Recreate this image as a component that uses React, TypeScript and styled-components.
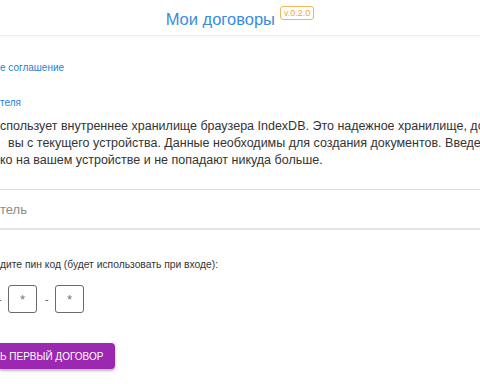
import React from "react";
import styled, { createGlobalStyle } from "styled-components";

const Global = createGlobalStyle`
  html, body { margin: 0; padding: 0; background: #fff; overflow: hidden; }
  body { font-family: "Liberation Sans", Arial, sans-serif; color: #333; }
`;

const Page = styled.div`
  width: 480px;
  height: 384px;
  overflow: hidden;
  display: flex;
  flex-direction: column;
`;

const Header = styled.header`
  height: 35px;
  flex: none;
  display: flex;
  align-items: center;
  justify-content: center;
  gap: 5px;
  border-bottom: 1px solid #ececec;
  box-shadow: 0 1px 2px rgba(0, 0, 0, 0.04);
`;

const Title = styled.h1`
  margin: 0;
  font-size: 16.5px;
  font-weight: 400;
  color: #3a8ce0;
  line-height: 20px;
  padding-top: 3px;
`;

const Badge = styled.span`
  align-self: flex-start;
  margin-top: 6px;
  font-size: 9px;
  line-height: 12px;
  color: #f0a43a;
  border: 1px solid #f5b457;
  border-radius: 3px;
  padding: 0 3px;
`;

const Content = styled.main`
  display: flex;
  flex-direction: column;
  align-items: flex-start;
`;

const Link = styled.a<{ $top: number }>`
  display: block;
  margin-top: ${(p) => p.$top}px;
  font-size: 10px;
  line-height: 14px;
  color: #1f7fdc;
  text-decoration: none;
`;

const Text = styled.p`
  margin: 8px 0 0;
  font-size: 12.5px;
  line-height: 17px;
  color: #333;
  white-space: nowrap;
`;

const Line = styled.span<{ $indent?: number }>`
  display: block;
  padding-left: ${(p) => p.$indent ?? 0}px;
`;

const Input = styled.input`
  box-sizing: border-box;
  margin-top: 20px;
  width: 480px;
  height: 41px;
  border: none;
  border-top: 1px solid #dcdcdc;
  border-bottom: 2px solid #e6e6e6;
  padding: 0;
  font-family: inherit;
  font-size: 13px;
  outline: none;
  &::placeholder { color: #8a8a8a; }
`;

const Label = styled.div`
  margin-top: 28px;
  font-size: 10.3px;
  line-height: 14px;
  color: #333;
`;

const PinRow = styled.div`
  margin: 13px 0 0 -2px;
  display: flex;
  align-items: center;
  gap: 8px;
`;

const Dash = styled.span`
  font-size: 11px;
  color: #555;
  width: 2px;
  text-align: center;
`;

const PinBox = styled.div`
  box-sizing: border-box;
  width: 29px;
  height: 28px;
  border: 1px solid #6a6a6a;
  border-radius: 3px;
  display: flex;
  align-items: center;
  justify-content: center;
  font-size: 13px;
  color: #777;
`;

const Button = styled.button`
  margin-top: 30px;
  height: 26px;
  padding: 0 12px 0 0;
  border: none;
  border-radius: 0 4px 4px 0;
  background: #9c27b0;
  color: #fff;
  font-family: inherit;
  font-size: 10px;
  text-transform: uppercase;
  box-shadow: 0 2px 2px rgba(0, 0, 0, 0.2), 0 1px 5px rgba(0, 0, 0, 0.12);
  cursor: pointer;
`;

export default function App() {
  return (
    <>
      <Global />
      <Page>
        <Header>
          <Title>Мои договоры</Title>
          <Badge>v.0.2.0</Badge>
        </Header>
        <Content>
          <Link $top={25} href="#">е соглашение</Link>
          <Link $top={21} href="#">теля</Link>
          <Text>
            <Line>спользует внутреннее хранилище браузера IndexDB. Это надежное хранилище, доступное</Line>
            <Line $indent={8}>вы с текущего устройства. Данные необходимы для создания документов. Введенные</Line>
            <Line>ко на вашем устройстве и не попадают никуда больше.</Line>
          </Text>
          <Input placeholder="тель" />
          <Label>дите пин код (будет использовать при входе):</Label>
          <PinRow>
            <Dash>-</Dash>
            <PinBox>*</PinBox>
            <Dash>-</Dash>
            <PinBox>*</PinBox>
          </PinRow>
          <Button>Ь первый договор</Button>
        </Content>
      </Page>
    </>
  );
}
